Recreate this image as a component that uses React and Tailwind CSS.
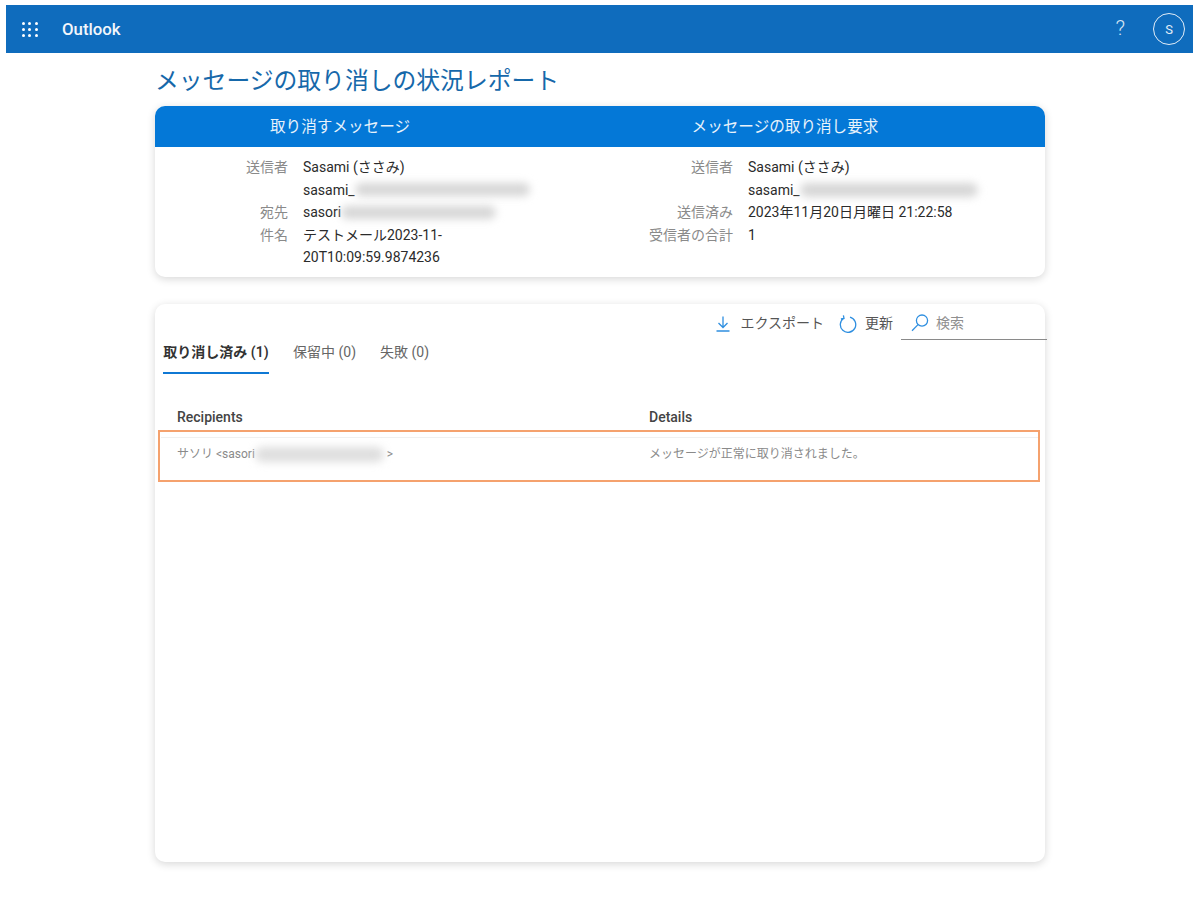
import React from "react";

function Blur({ className }) {
  return <span className={`inline-block rounded-full blur-[4px] ${className}`} />;
}

function InfoRow({ label, children }) {
  return (
    <div className="flex min-h-[22.5px] items-center text-[14px] leading-[22.5px]">
      <div className="w-[148px] shrink-0 pr-[15px] text-right text-[#8a8a8a]">{label}</div>
      <div className="flex min-w-0 items-center text-[#2b2b2b]">{children}</div>
    </div>
  );
}

function Tab({ active, children }) {
  return (
    <div className={`flex h-[34px] items-center justify-center text-[14px] ${active ? "border-b-2 border-[#0f78d4] pb-[8px] font-semibold text-[#333333]" : "pb-[10px] text-[#666666]"}`}>
      {children}
    </div>
  );
}

function ExportIcon() {
  return (
    <svg viewBox="0 0 14 16" className="h-[16px] w-[14px]" fill="none" stroke="#2f8fe0" strokeWidth="1.3">
      <path d="M7 0.5V11.5M2.5 7L7 11.5L11.5 7M0.5 15H13.5" />
    </svg>
  );
}

function RefreshIcon() {
  return (
    <svg viewBox="0 0 18 18" className="h-[18px] w-[18px]" fill="none" stroke="#2f8fe0" strokeWidth="1.3">
      <path d="M4.8 3.2A7.7 7.7 0 1 0 11 2.2M4.4 0.4L5 3.4L1.9 4" />
    </svg>
  );
}

function SearchIcon() {
  return (
    <svg viewBox="0 0 18 18" className="h-[18px] w-[18px]" fill="none" stroke="#2f8fe0" strokeWidth="1.3">
      <circle cx="11" cy="6.6" r="5.6" />
      <path d="M7 10.6L1 16.8" />
    </svg>
  );
}

export default function App() {
  return (
    <div className="min-h-[903px] bg-white px-[6px] pt-[5px] font-['Roboto','Noto_Sans_CJK_JP',sans-serif]">
      <header className="mr-[1px] flex h-[48px] items-center bg-[#0f6cbd] text-white">
        <div className="ml-[16px] grid w-[16px] grid-cols-3 gap-[3px]">
          {[0, 1, 2, 3, 4, 5, 6, 7, 8].map((i) => (
            <span key={i} className="h-[3px] w-[3px] rounded-full bg-white" />
          ))}
        </div>
        <div className="ml-[24px] pt-[2px] text-[16.8px] font-medium text-[#f2f6fb]">Outlook</div>
        <div className="ml-auto text-[21px] font-light text-[#d5e4f3]">?</div>
        <div className="ml-[28px] mr-[8px] flex h-[32px] w-[32px] items-center justify-center rounded-full border border-[#e2edf7] pt-[1px] text-[13px] text-[#e2edf7]">
          S
        </div>
      </header>

      <main className="mx-auto w-[890px]">
        <h1 className="mt-[10px] h-[43px] text-[23.8px] leading-[36px] text-[#1668aa]">メッセージの取り消しの状況レポート</h1>

        <section className="h-[171px] overflow-hidden rounded-[10px] bg-white shadow-[0_2px_8px_rgba(0,0,0,0.16)]">
          <div className="flex h-[41px] items-center bg-[#0478d7] pt-[3px] text-[15.6px] text-[#e8f2fb]">
            <div className="w-[445px] pr-[75px] text-center">取り消すメッセージ</div>
            <div className="w-[445px] pr-[75px] text-center">メッセージの取り消し要求</div>
          </div>
          <div className="flex pt-[9px]">
            <div className="w-[445px]">
              <InfoRow label="送信者">Sasami (ささみ)</InfoRow>
              <InfoRow label="">sasami_<Blur className="h-[13px] w-[175px] bg-[#d6d6d6]" /></InfoRow>
              <InfoRow label="宛先">sasori<Blur className="h-[13px] w-[155px] bg-[#d6d6d6]" /></InfoRow>
              <InfoRow label="件名">テストメール2023-11-</InfoRow>
              <InfoRow label="">20T10:09:59.9874236</InfoRow>
            </div>
            <div className="w-[445px]">
              <InfoRow label="送信者">Sasami (ささみ)</InfoRow>
              <InfoRow label="">sasami_<Blur className="h-[14px] w-[178px] bg-[#d6d6d6]" /></InfoRow>
              <InfoRow label="送信済み">2023年11月20日月曜日 21:22:58</InfoRow>
              <InfoRow label="受信者の合計">1</InfoRow>
            </div>
          </div>
        </section>

        <section className="mt-[27px] h-[558px] rounded-[10px] bg-white shadow-[0_2px_8px_rgba(0,0,0,0.16)]">
          <div className="-mr-[2px] flex h-[36px] items-center justify-end pt-[3px] text-[14px] text-[#555555]">
            <ExportIcon />
            <span className="ml-[10px]">エクスポート</span>
            <span className="ml-[15px]"><RefreshIcon /></span>
            <span className="ml-[8px]">更新</span>
            <div className="ml-[8px] flex h-[33px] w-[146px] items-center border-b border-[#8a8a8a] pl-[10px]">
              <SearchIcon />
              <span className="ml-[7px] text-[#8f8f8f]">検索</span>
            </div>
          </div>

          <div className="ml-[8px] flex">
            <div className="w-[106px]"><Tab active>取り消し済み (1)</Tab></div>
            <div className="ml-[24px]"><Tab>保留中 (0)</Tab></div>
            <div className="ml-[24px]"><Tab>失敗 (0)</Tab></div>
          </div>

          <div className="mt-[31px] flex h-[24px] items-center text-[14px] font-medium text-[#444444]">
            <div className="w-[494px] pl-[22px]">Recipients</div>
            <div>Details</div>
          </div>

          <div className="relative mt-[8px] h-[50px]">
            <div className="ml-[6px] mr-[6px] border-t border-[#f0f0f0]" />
            <div className="flex pt-[5px] text-[12px] leading-[22px] text-[#8a8a8a]">
              <div className="flex w-[494px] items-center pl-[22px]">
                サソリ &lt;sasori<Blur className="h-[15px] w-[129px] bg-[#dedede]" /><span className="ml-[3px]">&gt;</span>
              </div>
              <div>メッセージが正常に取り消されました。</div>
            </div>
            <div className="absolute left-[3px] top-[-7px] h-[52px] w-[882px] border-2 border-[#f5a26e]" />
          </div>
        </section>
      </main>
    </div>
  );
}
